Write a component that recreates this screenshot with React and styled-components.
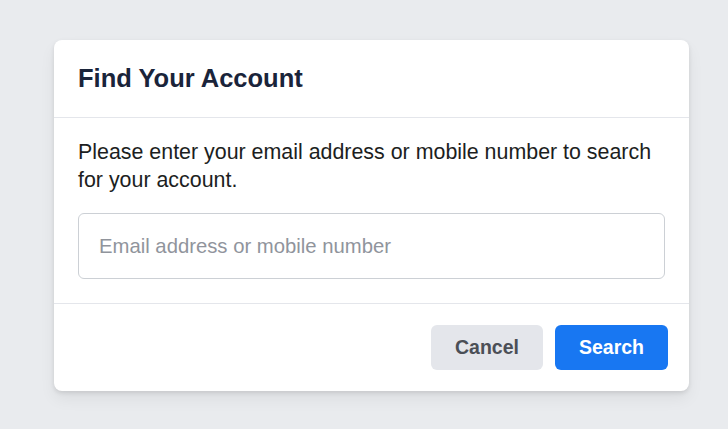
import React from 'react'
import styled, { createGlobalStyle } from 'styled-components'

const Global = createGlobalStyle`
  html, body { margin: 0; padding: 0; background: #e9ebee; }
  body { font-family: "Liberation Sans", Arial, Helvetica, sans-serif; }
  * { box-sizing: border-box; }
`

const Page = styled.div`
  min-height: 429px;
  padding: 40px 0 0 54px;
`

const Card = styled.section`
  width: 635px;
  background: #fff;
  border-radius: 8px;
  box-shadow: 0 2px 4px rgba(0,0,0,0.1), 0 8px 16px rgba(0,0,0,0.06);
`

const Header = styled.header`
  height: 78px;
  padding: 0 24px;
  display: flex;
  align-items: center;
  border-bottom: 1px solid #e4e6eb;
`

const Title = styled.h2`
  margin: 0;
  font-size: 25.5px;
  font-weight: 700;
  color: #1a243a;
`

const Body = styled.div`
  padding: 20px 24px 24px;
  border-bottom: 1px solid #e4e6eb;
`

const Text = styled.p`
  margin: 0 0 19px;
  font-size: 21.4px;
  line-height: 28px;
  color: #1c1e21;
`

const Input = styled.input`
  display: block;
  width: 587px;
  height: 66px;
  padding: 0 20px;
  border: 1px solid #ccd0d5;
  border-radius: 6px;
  font-family: inherit;
  font-size: 20.3px;
  color: #1c1e21;
  outline: none;
  &::placeholder { color: #90949c; }
`

const Footer = styled.footer`
  display: flex;
  justify-content: flex-end;
  gap: 12px;
  padding: 21px 21px 21px;
`

const Button = styled.button`
  width: ${p => p.$w}px;
  height: 45px;
  border: none;
  border-radius: 6px;
  font-family: inherit;
  font-size: 19.5px;
  font-weight: 700;
  cursor: pointer;
  background: ${p => p.$primary ? '#1877f2' : '#e4e6eb'};
  color: ${p => p.$primary ? '#fff' : '#4b4f56'};
`

export default function App() {
  return (
    <>
      <Global />
      <Page>
        <Card>
          <Header>
            <Title>Find Your Account</Title>
          </Header>
          <Body>
            <Text>Please enter your email address or mobile number to search for your account.</Text>
            <Input placeholder="Email address or mobile number" />
          </Body>
          <Footer>
            <Button $w={112}>Cancel</Button>
            <Button $w={113} $primary>Search</Button>
          </Footer>
        </Card>
      </Page>
    </>
  )
}
